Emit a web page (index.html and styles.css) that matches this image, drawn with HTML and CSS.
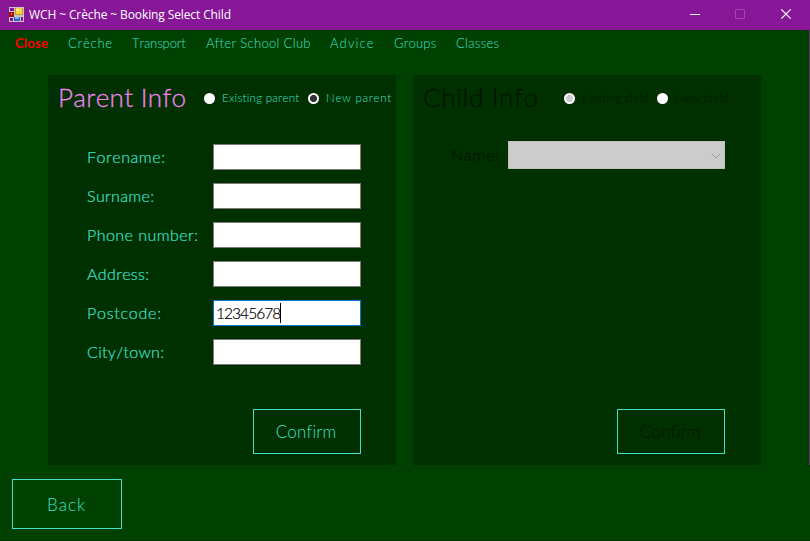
FILE: index.html
```
<!DOCTYPE html>
<html lang="en">
<head>
<meta charset="utf-8">
<title>WCH ~ Crèche ~ Booking Select Child</title>
<link rel="stylesheet" href="styles.css">
</head>
<body>
<div class="window">
  <header class="titlebar">
    <svg class="app-icon" width="15" height="15" viewBox="0 0 15 15" shape-rendering="crispEdges">
      <path fill="#c9c2cf" d="M0 0h15v15H0z"/>
      <path fill="#881798" d="M1 1h4v3H1zM1 11h3v3H1z"/>
      <path fill="#a01010" d="M0 5h5v5H0z"/><path fill="#f08060" d="M2 6h1v2H2z"/>
      <path fill="#c89a18" d="M6 1h8v7H6z"/><path fill="#ffd23c" d="M7 1h6v6H7z"/><path fill="#fff0a0" d="M7 2h3v2H7z"/>
      <path fill="#2d62c8" d="M5 10h6v4H5z"/><path fill="#78b4f4" d="M6 10h4v2H6z"/>
      <path fill="#881798" d="M12 10h2v4h-2z"/>
    </svg>
    <span class="caption">WCH ~ Crèche ~ Booking Select Child</span>
    <svg class="controls" width="110" height="30" viewBox="0 0 110 30" fill="none">
      <path stroke="#fff" d="M0 14.5h10"/>
      <path stroke="#a045ad" d="M45.500 9.500h9v9h-9z"/>
      <path stroke="#fff" stroke-width="1.200" d="M91.300 9.300l9.400 9.400M100.700 9.300l-9.400 9.400"/>
    </svg>
  </header>
  <nav class="menu">
    <a class="close">Close</a><a class="creche">Crèche</a><a class="transport">Transport</a><a class="club">After School Club</a><a class="advice">Advice</a><a class="groups">Groups</a><a class="classes">Classes</a>
  </nav>
  <main class="panels">
    <section class="panel parent">
      <div class="head">
        <h1>Parent Info</h1>
        <label class="first"><i class="radio"></i><span class="ep">Existing parent</span></label>
        <label class="second"><i class="radio on"></i><span class="np">New parent</span></label>
      </div>
      <div class="fields">
        <div class="row"><span class="forename">Forename:</span><b class="input"></b></div>
        <div class="row"><span class="surname">Surname:</span><b class="input"></b></div>
        <div class="row"><span class="phone">Phone number:</span><b class="input"></b></div>
        <div class="row"><span class="address">Address:</span><b class="input"></b></div>
        <div class="row"><span class="postcode">Postcode:</span><b class="input focus"><span class="value">12345678</span><i class="caret"></i></b></div>
        <div class="row"><span class="city">City/town:</span><b class="input"></b></div>
      </div>
      <div class="button confirm"><span>Confirm</span></div>
    </section>
    <section class="panel child">
      <div class="head">
        <h1>Child Info</h1>
        <label class="first"><i class="radio on"></i><span class="ec">Existing child</span></label>
        <label class="second"><i class="radio"></i><span class="nc">New child</span></label>
      </div>
      <div class="name-row"><span class="name">Name:</span>
        <div class="select"><svg width="10" height="6" viewBox="0 0 10 6" fill="none"><path stroke="#9c9c9c" d="M.8.8L5 5 9.200.8"/></svg></div>
      </div>
      <div class="button confirm"><span>Confirm</span></div>
    </section>
  </main>
  <div class="button back"><span>Back</span></div>
</div>
</body>
</html>
```
FILE: styles.css
```
* { box-sizing: border-box; }
body { margin: 0; overflow: hidden; }
.window {
  display: flex; flex-direction: column;
  width: 810px; height: 541px; background: #004000; color: #40e0d0;
  font: 300 16px "Lato", sans-serif; font-kerning: none; font-variant-ligatures: none; white-space: nowrap;
  border-bottom: 1px solid #003200;
}
.titlebar { flex: none; height: 30px; display: flex; align-items: center; background: #881798; color: #fff; padding-left: 9px; }
.app-icon { margin-top: -2px; }
.caption { margin-left: 5px; font: 400 12px/28px "Open Sans", sans-serif; letter-spacing: -0.11px; }
.controls { margin-left: auto; margin-right: 10px; }
.menu { flex: none; display: flex; height: 45px; padding-left: 15px; line-height: 26px; font-size: 13px; font-weight: 300; border-right: 1px solid #6e2878; }
.menu a { flex: none; }
.close { width: 53px; color: #f00; font-weight: 700; letter-spacing: 0.26px; }
.creche { width: 64px; letter-spacing: .78px; }
.transport { width: 74px; letter-spacing: -.1px; }
.club { width: 124px; letter-spacing: .32px; }
.advice { width: 64px; letter-spacing: 1.1px; }
.groups { width: 62px; letter-spacing: .2px; }
.classes { letter-spacing: .3px; }
.panels { flex: none; display: flex; gap: 17px; padding-left: 48px; height: 390px; border-right: 1px solid #6e2878; }
.panel { width: 348px; background: #003000; display: flex; flex-direction: column; }
.head { display: flex; height: 46px; align-items: center; padding-left: 10px; }
h1 { margin: 0; padding-bottom: 2px; width: 146px; font-size: 26px; font-weight: 300; line-height: 42px; color: #ee82ee; letter-spacing: .3px; -webkit-text-stroke: .3px; }
.head label { display: flex; align-items: center; font-size: 11.5px; font-weight: 300; line-height: 14px; }
.first { width: 104px; }
.ep { letter-spacing: .26px; }
.np { letter-spacing: .7px; }
.ec { letter-spacing: .12px; }
.nc { letter-spacing: .54px; }
.radio { width: 11px; height: 11px; border-radius: 50%; background: #fff; margin-right: 7px; }
.parent .on { background: radial-gradient(circle, #333 0 3.200px, #fff 3.900px); }
.child .on { background: radial-gradient(circle, #ccc 0 3.200px, #fff 3.900px); }
.fields { display: flex; flex-direction: column; gap: 13px; margin: 23px 0 0 39px; }
.row { display: flex; align-items: center; justify-content: space-between; width: 274px; height: 26px; }
.row > span, .name { padding-bottom: 2px; -webkit-text-stroke: .2px; }
.forename { letter-spacing: .55px; }
.surname { letter-spacing: .34px; }
.phone { letter-spacing: .45px; }
.address { letter-spacing: .35px; }
.postcode { letter-spacing: .76px; }
.city { letter-spacing: .32px; }
.input { display: flex; align-items: center; width: 148px; height: 26px; background: #fff; border: 1px solid #7a7a7a; color: #000; padding-left: 2px; }
.focus { border-color: #0078d7; }
.value { font-size: 15.5px; font-weight: 300; letter-spacing: -.95px; width: 64px; -webkit-text-stroke: .2px; }
.caret { width: 1px; height: 20px; background: #000; }
.button { flex: none; display: flex; align-items: center; justify-content: center; border: 1px solid #40e0d0; font-size: 17px; letter-spacing: .14px; }
.confirm { width: 108px; height: 45px; margin: auto 35px 11px auto; }
.confirm span { margin-right: 2px; }
.child .confirm { margin-right: 36px; }
.back { width: 110px; height: 50px; margin: 14px 0 0 12px; letter-spacing: .97px; }
.back span { margin: 0 1px 0 0; }
.child { color: #001400; }
.child h1 { color: #001400; width: 141px; letter-spacing: .64px; }
.child .first { width: 93px; }
.name-row { display: flex; align-items: center; margin: 20px 0 0 38px; }
.name { width: 57px; letter-spacing: .78px; }
.select { width: 217px; height: 28px; background: #ccc; border: 1px solid #bfbfbf; display: flex; align-items: center; justify-content: flex-end; padding: 1px 3px 0 0; }
```
